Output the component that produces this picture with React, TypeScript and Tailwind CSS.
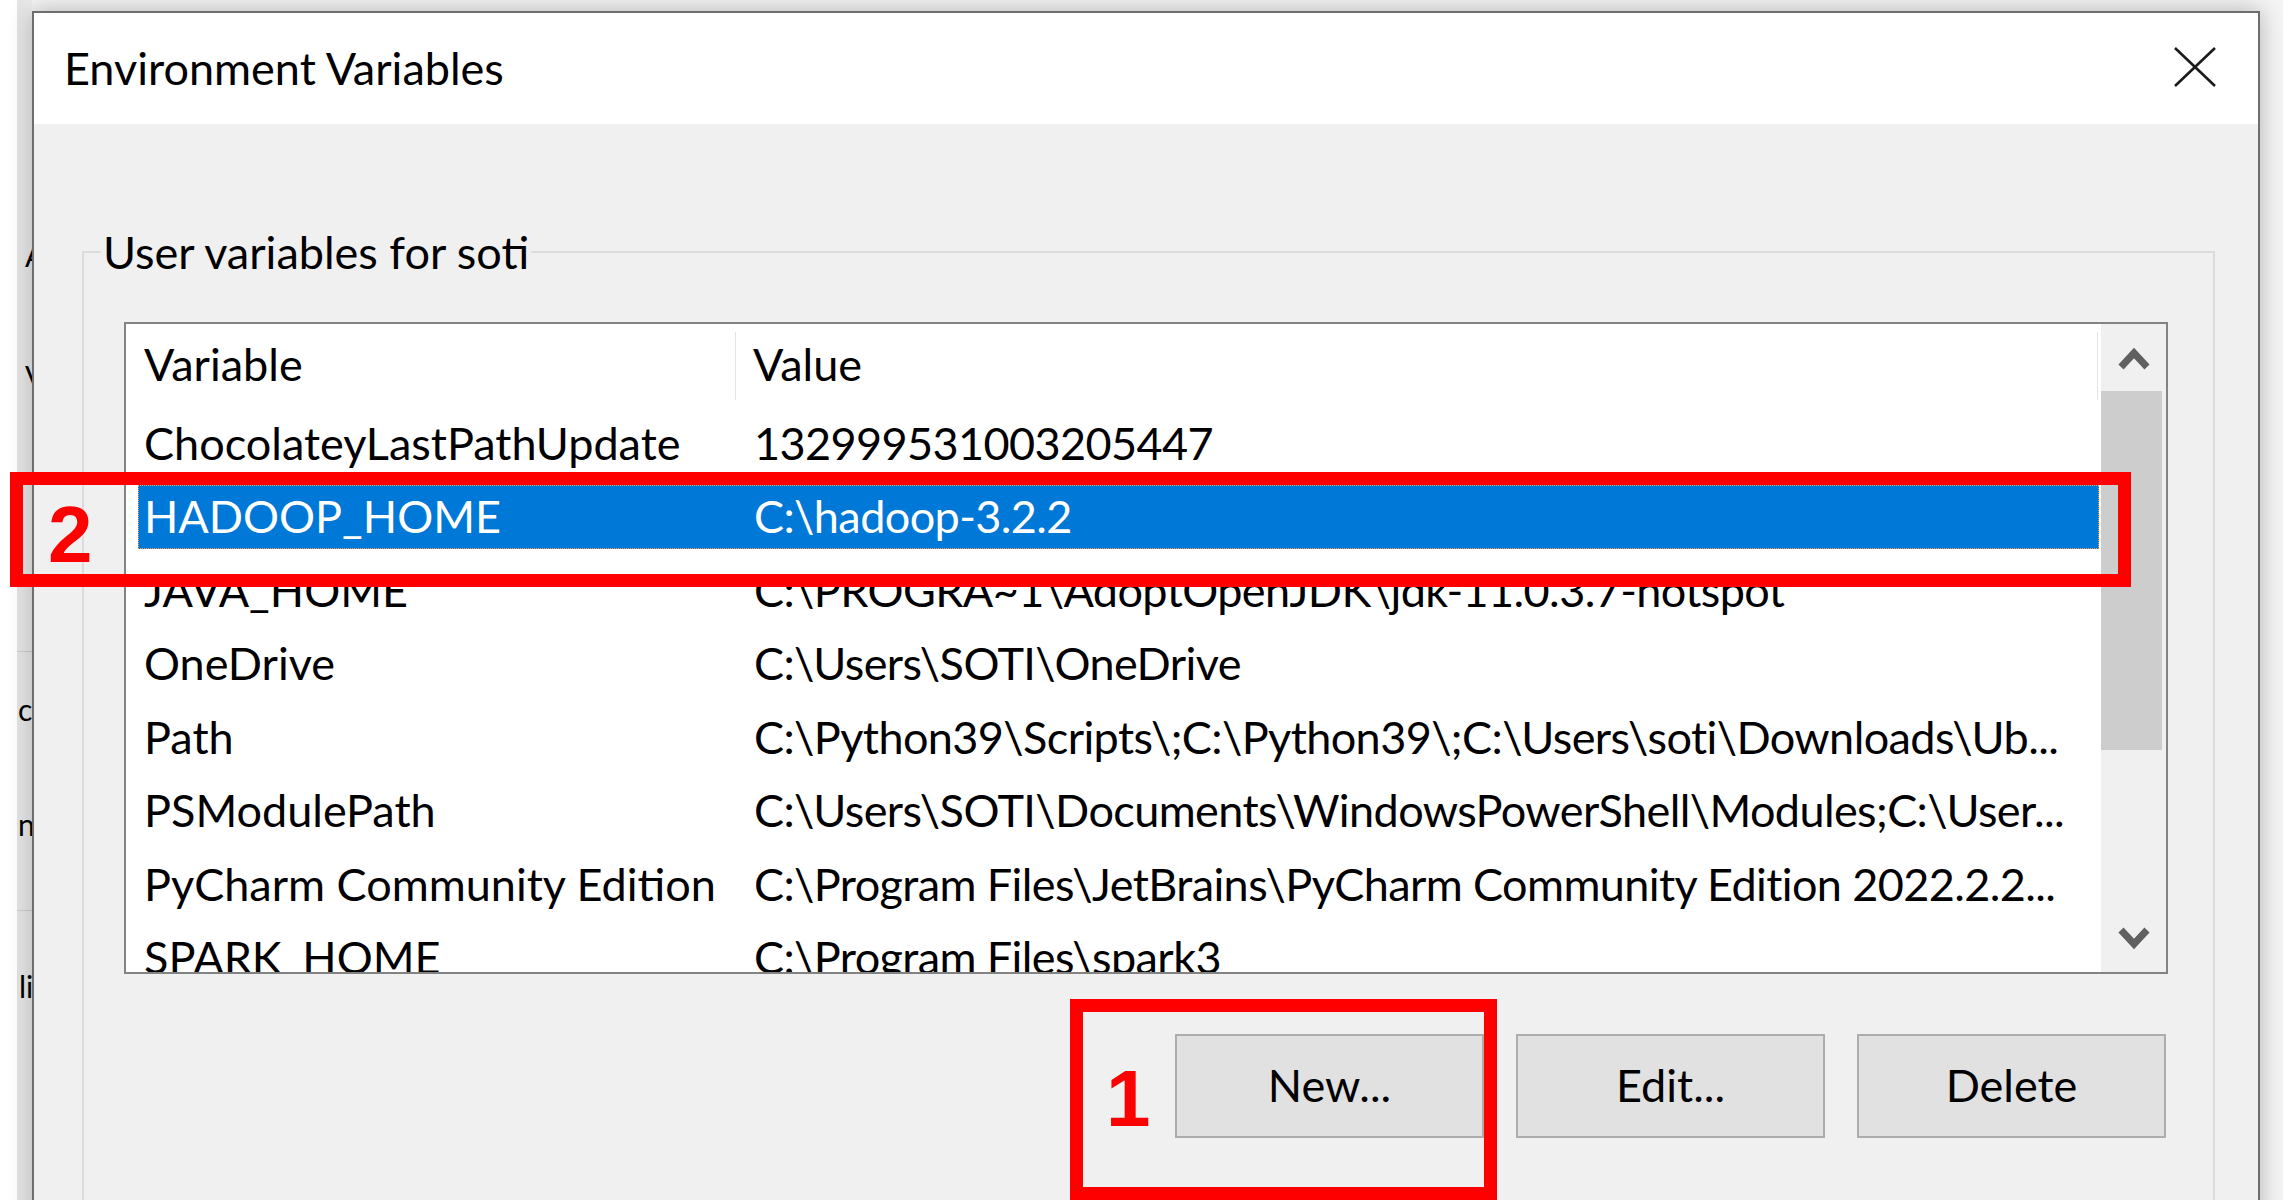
import React from "react";

const rows: [string, string][] = [
  ["ChocolateyLastPathUpdate", "132999531003205447"],
  ["HADOOP_HOME", "C:\\hadoop-3.2.2"],
  ["JAVA_HOME", "C:\\PROGRA~1\\AdoptOpenJDK\\jdk-11.0.3.7-hotspot"],
  ["OneDrive", "C:\\Users\\SOTI\\OneDrive"],
  ["Path", "C:\\Python39\\Scripts\\;C:\\Python39\\;C:\\Users\\soti\\Downloads\\Ub..."],
  ["PSModulePath", "C:\\Users\\SOTI\\Documents\\WindowsPowerShell\\Modules;C:\\User..."],
  ["PyCharm Community Edition", "C:\\Program Files\\JetBrains\\PyCharm Community Edition 2022.2.2..."],
  ["SPARK_HOME", "C:\\Program Files\\spark3"],
];

const font = "font-['Lato','Liberation_Sans',sans-serif]";

function Chevron({ up }: { up?: boolean }) {
  return (
    <svg width="32" height="24" viewBox="0 0 32 24" className="text-[#606060]">
      <path
        d={up ? "M3 21 L16 7 L29 21" : "M3 3 L16 17 L29 3"}
        fill="none"
        stroke="currentColor"
        strokeWidth="7"
        strokeLinejoin="miter"
      />
    </svg>
  );
}

function ParentStrip() {
  // the window behind the dialog, only its left edge shows
  return (
    <div className="flex w-[32px] shrink-0">
      <div className="w-[17px] bg-white" />
      <div className={`flex h-[1200px] w-[15px] flex-col overflow-hidden bg-gradient-to-r from-[#e4e4e4] to-[#eeeeee] text-[30px] leading-none text-black ${font}`}>
        <div className="mt-[240px] shrink-0 pl-[8px]">A</div>
        <div className="mt-[91px] shrink-0 pl-[8px]">V</div>
        <div className="mt-[260px] h-px shrink-0 bg-[#cfcfcf]" />
        <div className="mt-[42px] shrink-0 pl-[1px]">c</div>
        <div className="mt-[85px] shrink-0 pl-[1px]">ni</div>
        <div className="mt-[71px] h-px shrink-0 bg-[#cfcfcf]" />
        <div className="mt-[60px] shrink-0 pl-[2px]">li</div>
      </div>
    </div>
  );
}

export default function App() {
  return (
    <div className={`relative flex h-[1200px] w-[2283px] items-start overflow-hidden bg-[#f4f4f4] ${font}`}>
      <ParentStrip />

      <div className="mt-[11px] flex w-[2228px] shrink-0 flex-col border-2 border-[#6e6e6e] shadow-[0_0_22px_rgba(0,0,0,0.28)]">
        {/* title bar */}
        <div className="flex h-[111px] shrink-0 items-center justify-between bg-white pl-[30px] pr-[42px]">
          <span className="text-[45px] text-black">Environment Variables</span>
          <svg width="42" height="40" viewBox="0 0 42 40" className="mt-[-4px]">
            <path d="M1 1 L41 39 M41 1 L1 39" stroke="#1b1b1b" strokeWidth="2.6" />
          </svg>
        </div>

        {/* body */}
        <div className="bg-[#f0f0f0] pb-[60px] pl-[48px] pr-[43px]">
          <fieldset className="mt-[103px] border-2 border-[#dcdcdc] pb-[200px] pl-[40px] pr-[45px] pt-[45px]">
            <legend className="ml-[-23px] px-[2px] text-[45px] leading-[50px] text-black">User variables for soti</legend>

            {/* list view */}
            <div className="flex h-[652px] overflow-hidden border-2 border-[#838383] bg-white text-[45px] text-black">
              <div className="flex flex-1 flex-col overflow-hidden">
                <div className="flex h-[82px] shrink-0">
                  <div className="flex w-[609px] items-center pl-[18px]">Variable</div>
                  <div className="mb-[6px] mt-[8px] w-px bg-[#e5e5e5]" />
                  <div className="flex flex-1 items-center pl-[17px]">Value</div>
                  <div className="mb-[6px] mr-[3px] mt-[8px] w-px bg-[#e5e5e5]" />
                </div>
                {rows.map(([name, value], i) => {
                  const selected = i === 1;
                  return (
                    <div key={name} className="h-[73.5px] shrink-0 pb-[4px] pl-[12px] pr-[2px] pt-[5.5px]">
                      <div
                        className={
                          selected
                            ? "flex h-full items-center whitespace-nowrap border border-dotted border-[#f7a24a] bg-[#0078d7] text-white"
                            : "flex h-full items-center whitespace-nowrap border border-transparent"
                        }
                      >
                        <div className="w-[615px] shrink-0 pl-[5px]">{name}</div>
                        <div className="tracking-[-0.6px]">{value}</div>
                      </div>
                    </div>
                  );
                })}
              </div>

              {/* scrollbar */}
              <div className="flex w-[65px] shrink-0 flex-col bg-[#f0f0f0]">
                <div className="flex h-[67px] shrink-0 items-center justify-center">
                  <Chevron up />
                </div>
                <div className="mr-[4px] h-[359px] shrink-0 bg-[#cdcdcd]" />
                <div className="flex-1" />
                <div className="flex h-[67px] shrink-0 items-center justify-center">
                  <Chevron />
                </div>
              </div>
            </div>

            <div className="mt-[60px] flex justify-end gap-[32px] pr-[2px]">
              {["New...", "Edit...", "Delete"].map((label) => (
                <button
                  key={label}
                  className="flex h-[104px] w-[309px] items-center justify-center border-2 border-[#adadad] bg-[#e1e1e1] text-[45px] text-black"
                >
                  {label}
                </button>
              ))}
            </div>
          </fieldset>
        </div>
      </div>

      {/* red annotation boxes */}
      <div className="absolute left-[10px] top-[472px] h-[115px] w-[2121px] border-[13px] border-[#ff0000]" />
      <div className="absolute left-[48px] top-[475px] font-['Liberation_Sans',sans-serif] text-[80px] font-bold text-[#ff0000]">2</div>
      <div className="absolute left-[1070px] top-[999px] h-[201px] w-[427px] border-[13px] border-[#ff0000]" />
      <div className="absolute left-[1106px] top-[1039px] font-['Liberation_Sans',sans-serif] text-[80px] font-bold text-[#ff0000]">1</div>
    </div>
  );
}
